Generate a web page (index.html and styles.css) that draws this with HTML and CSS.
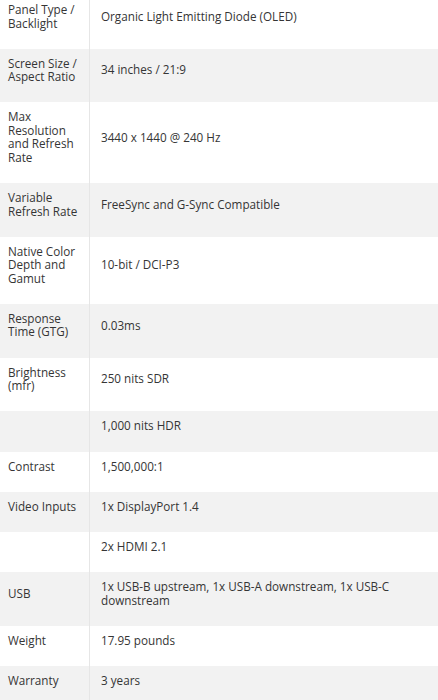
FILE: index.html
```html
<!DOCTYPE html>
<html>
<head>
<meta charset="utf-8">
<link rel="stylesheet" href="styles.css">
</head>
<body>
<table class="specs">
  <tbody>
    <tr><td class="label">Panel Type / Backlight</td><td class="value">Organic Light Emitting Diode (OLED)</td></tr>
    <tr><td class="label">Screen Size / Aspect Ratio</td><td class="value">34 inches / 21:9</td></tr>
    <tr><td class="label">Max Resolution and Refresh Rate</td><td class="value">3440 x 1440 @ 240 Hz</td></tr>
    <tr><td class="label">Variable Refresh Rate</td><td class="value">FreeSync and G-Sync Compatible</td></tr>
    <tr><td class="label">Native Color Depth and Gamut</td><td class="value">10-bit / DCI-P3</td></tr>
    <tr><td class="label">Response Time (GTG)</td><td class="value">0.03ms</td></tr>
    <tr><td class="label">Brightness (mfr)</td><td class="value">250 nits SDR</td></tr>
    <tr><td class="label"></td><td class="value">1,000 nits HDR</td></tr>
    <tr><td class="label">Contrast</td><td class="value">1,500,000:1</td></tr>
    <tr><td class="label">Video Inputs</td><td class="value">1x DisplayPort 1.4</td></tr>
    <tr><td class="label"></td><td class="value">2x HDMI 2.1</td></tr>
    <tr><td class="label">USB</td><td class="value">1x USB-B upstream, 1x USB-A downstream, 1x USB-C downstream</td></tr>
    <tr><td class="label">Weight</td><td class="value">17.95 pounds</td></tr>
    <tr><td class="label">Warranty</td><td class="value">3 years</td></tr>
  </tbody>
</table>
</body>
</html>
```

FILE: styles.css
```css
html, body {
  margin: 0;
  padding: 0;
  background: #ffffff;
}

.specs {
  width: 438px;
  margin-top: -5px;
  border-collapse: collapse;
  font-family: "Open Sans", "Liberation Sans", sans-serif;
  font-size: 11.7px;
  line-height: 13.5px;
  color: #353535;
}

.specs tr:nth-child(even) {
  background: #f2f2f2;
}

.specs td {
  padding: 8px 3px 18.7px 8px;
  vertical-align: middle;
}

.specs .label {
  width: 78px;
  border-right: 1px solid #e6e6e6;
}

.specs .value {
  padding-left: 11px;
  padding-right: 40px;
}
```
